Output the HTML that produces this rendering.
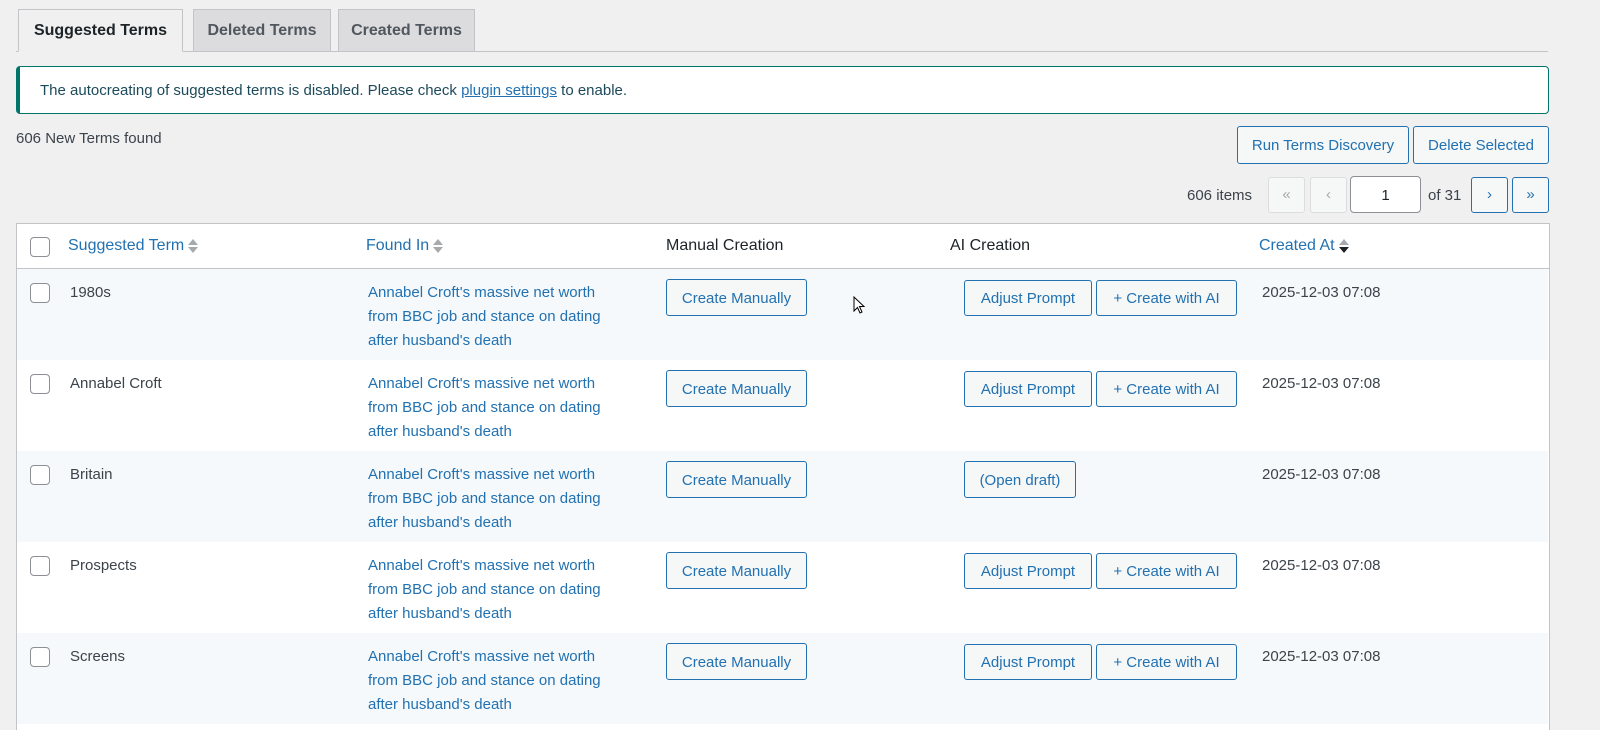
<!DOCTYPE html>
<html><head><style>
*{box-sizing:border-box}
body{margin:0;width:1600px;height:730px;overflow:hidden;background:#f0f0f1;font-family:"Liberation Sans",sans-serif;font-size:15px;color:#3c434a;position:relative}
.abs{position:absolute}
.tab{position:absolute;top:9px;height:43px;border:1px solid #c3c4c7;background:#dcdcde;font-size:16px;font-weight:bold;color:#50575e;line-height:42px;text-align:center}
.btn{position:absolute;border:1px solid #2271b1;border-radius:3px;background:#f6f7f7;color:#2271b1;font-size:15px;text-align:center;white-space:nowrap}
.pg{position:absolute;top:177px;height:36px;width:37px;border:1px solid #2271b1;border-radius:3px;background:#f6f7f7;color:#2271b1;text-align:center;line-height:34px;font-size:15px}
.pg.dis{border-color:#dcdcde;color:#a7aaad}
.cb{position:absolute;width:20px;height:20px;border:1px solid #8c8f94;border-radius:4px;background:#fff}
.row{position:absolute;left:17px;width:1531px;height:91px}
.link{color:#2271b1}
.sort{display:inline-block;vertical-align:middle;margin-left:4px;width:10px;height:16px;position:relative}
.sort:before{content:"";position:absolute;left:0;top:1px;border:5px solid transparent;border-bottom:6px solid #a7aaad;border-top:0}
.sort:after{content:"";position:absolute;left:0;top:9px;border:5px solid transparent;border-top:6px solid #a7aaad;border-bottom:0}
.sort.d:after{border-top-color:#1d2327}
</style></head><body>
<div class="abs" style="left:16px;top:51px;width:1532px;height:1px;background:#c3c4c7"></div>
<div class="tab" style="left:18px;width:165px;background:#f0f0f1;color:#1d2327;border-bottom-color:#f0f0f1">Suggested Terms</div>
<div class="tab" style="left:193px;width:138px">Deleted Terms</div>
<div class="tab" style="left:338px;width:137px">Created Terms</div>

<div class="abs" style="left:16px;top:66px;width:1533px;height:48px;background:#fff;border:1px solid #00756a;border-left:4px solid #00756a;border-radius:4px;line-height:48px;padding-left:20px;color:#1d4a5a">The autocreating of suggested terms is disabled. Please check <span style="color:#2271b1;text-decoration:underline">plugin settings</span> to enable.</div>

<div class="abs" style="left:16px;top:130px">606 New Terms found</div>
<div class="btn" style="left:1237px;top:126px;width:172px;height:38px;line-height:38px">Run Terms Discovery</div>
<div class="btn" style="left:1413px;top:126px;width:136px;height:38px;line-height:38px">Delete Selected</div>

<div class="abs" style="left:1187px;top:187px">606 items</div>
<div class="pg dis" style="left:1268px">«</div>
<div class="pg dis" style="left:1310px">‹</div>
<div class="abs" style="left:1350px;top:176px;width:71px;height:37px;border:1px solid #8c8f94;border-radius:4px;background:#fff;text-align:center;line-height:37px;color:#1d2327">1</div>
<div class="abs" style="left:1428px;top:187px">of 31</div>
<div class="pg" style="left:1471px">›</div>
<div class="pg" style="left:1512px">»</div>

<div class="abs" style="left:16px;top:223px;width:1534px;height:507px;background:#fff;border:1px solid #c3c4c7;border-bottom:0"></div>
<div class="abs" style="left:17px;top:268px;width:1532px;height:1px;background:#c3c4c7"></div>
<div class="cb" style="left:30px;top:237px"></div>
<div class="abs link" style="left:68px;top:237px;font-size:16px">Suggested Term<span class="sort"></span></div>
<div class="abs link" style="left:366px;top:237px;font-size:16px">Found In<span class="sort"></span></div>
<div class="abs" style="left:666px;top:237px;font-size:16px;color:#1d2327">Manual Creation</div>
<div class="abs" style="left:950px;top:237px;font-size:16px;color:#1d2327">AI Creation</div>
<div class="abs link" style="left:1259px;top:237px;font-size:16px">Created At<span class="sort d"></span></div>

<div id="rows"></div>
<script>
var terms=["1980s","Annabel Croft","Britain","Prospects","Screens"];
var h="";
terms.forEach(function(t,i){
var y=269+i*91;
h+='<div class="row" style="top:'+y+'px;background:'+(i%2==0?'#f6f9fb':'#fff')+'"></div>';
h+='<div class="cb" style="left:30px;top:'+(y+14)+'px"></div>';
h+='<div class="abs" style="left:70px;top:'+(y+15)+'px">'+t+'</div>';
h+='<div class="abs link" style="left:368px;top:'+(y+12)+'px;line-height:24px;width:290px">Annabel Croft\'s massive net worth<br>from BBC job and stance on dating<br>after husband\'s death</div>';
h+='<div class="btn" style="left:666px;top:'+(y+10)+'px;width:141px;height:37px;line-height:37px">Create Manually</div>';
if(t=="Britain"){
h+='<div class="btn" style="left:964px;top:'+(y+10)+'px;width:112px;height:37px;line-height:37px">(Open draft)</div>';
}else{
h+='<div class="btn" style="left:964px;top:'+(y+11)+'px;width:128px;height:36px;line-height:36px">Adjust Prompt</div>';
h+='<div class="btn" style="left:1096px;top:'+(y+11)+'px;width:141px;height:36px;line-height:36px">+ Create with AI</div>';
}
h+='<div class="abs" style="left:1262px;top:'+(y+15)+'px">2025-12-03 07:08</div>';
});
document.getElementById('rows').innerHTML=h;
</script>
<svg class="abs" style="left:853px;top:296px" width="14" height="20" viewBox="0 0 14 20"><path d="M1 1 L1 15 L4.5 11.5 L7 17 L9 16 L6.5 10.5 L11 10.5 Z" fill="#fff" stroke="#000" stroke-width="1"/></svg>
</body></html>
